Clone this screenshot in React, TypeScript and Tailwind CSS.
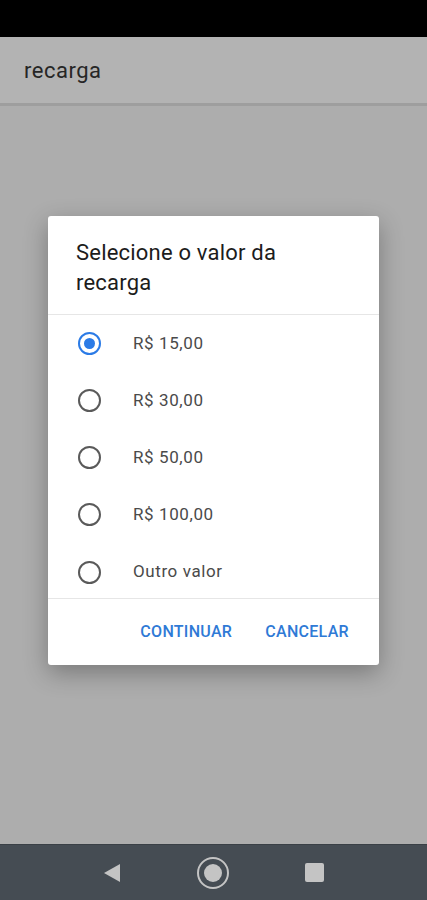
import React, { useState } from 'react';

const valores = ['R$ 15,00', 'R$ 30,00', 'R$ 50,00', 'R$ 100,00', 'Outro valor'];

function Radio({ checked }: { checked: boolean }) {
    return (
        <div className={'w-[23px] h-[23px] rounded-full border-2 flex items-center justify-center ' +
            (checked ? 'border-[#2b7be6]' : 'border-[#5a5a5a]')}>
            {checked && <div className="w-[11px] h-[11px] rounded-full bg-[#2b7be6]"></div>}
        </div>
    );
}

export default function App() {
    const [sel, setSel] = useState(0);

    return (
        <div className="w-[427px] h-[900px] flex flex-col bg-[#adadad] font-['Roboto',sans-serif] overflow-hidden">
            <div className="h-[37px] bg-black"></div>
            <div className="h-[69px] bg-[#b3b3b3] flex items-center px-6 border-b-[3px] border-[#9e9e9e]">
                <span className="text-[22px] tracking-[0.5px] text-[#262626]">recarga</span>
            </div>

            <div className="flex-1 pt-[110px]">
                <div className="mx-[48px] bg-white rounded-[3px] shadow-[0_8px_24px_rgba(0,0,0,0.3)]">
                    <div className="pl-7 pr-6 pt-[22px] pb-4 text-[22px] tracking-[0.2px] leading-[30px] text-[#1c1c1c]">
                        Selecione o valor da recarga
                    </div>
                    <div className="border-t border-[#e6e6e6]"></div>
                    <div className="flex flex-col">
                        {valores.map((v, i) => (
                            <div key={v} className="h-[57px] last:h-[55px] last:pt-[3px] flex items-center pl-[30px] cursor-pointer"
                                onClick={() => setSel(i)}>
                                <Radio checked={sel === i} />
                                <span className="ml-[32px] text-[17px] tracking-[0.6px] text-[#4a4a4a]">{v}</span>
                            </div>
                        ))}
                    </div>
                    <div className="border-t border-[#e6e6e6]"></div>
                    <div className="h-[66px] flex items-center justify-end gap-[33px] pr-[30px]">
                        <button className="text-[16px] font-medium text-[#2f7ad6] tracking-[0.3px]">CONTINUAR</button>
                        <button className="text-[16px] font-medium text-[#2f7ad6] tracking-[0.3px]">CANCELAR</button>
                    </div>
                </div>
            </div>

            <div className="h-[56px] bg-[#454c53] flex items-center justify-center gap-[75px] border-t border-[#3a4046]">
                <svg width="18" height="20" viewBox="0 0 18 20">
                    <path d="M17 1 L17 19 L1 10 Z" fill="#c4c4c4" />
                </svg>
                <svg width="34" height="34" viewBox="0 0 34 34">
                    <circle cx="17" cy="17" r="15" fill="none" stroke="#c4c4c4" strokeWidth="2" />
                    <circle cx="17" cy="17" r="9" fill="#c4c4c4" />
                </svg>
                <svg width="19" height="19" viewBox="0 0 19 19">
                    <rect x="0" y="0" width="19" height="19" rx="2" fill="#c4c4c4" />
                </svg>
            </div>
        </div>
    );
}
